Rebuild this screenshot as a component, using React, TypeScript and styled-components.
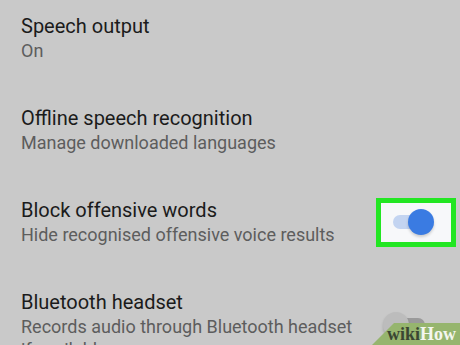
import React from "react";
import styled, { createGlobalStyle } from "styled-components";

const Global = createGlobalStyle`
  html, body {
    margin: 0;
    padding: 0;
    width: 460px;
    height: 345px;
    overflow: hidden;
    background: #c9c9c9;
  }
  * { box-sizing: border-box; }
`;

const Screen = styled.div`
  position: relative;
  width: 460px;
  height: 345px;
  overflow: hidden;
  background: #c9c9c9;
  padding-top: 1px;
  font-family: Roboto, "Noto Sans", sans-serif;
`;

const Row = styled.div`
  display: flex;
  height: 92px;
  padding: 12px 26px 0 21px;
`;

const RowInner = styled.div`
  display: flex;
  align-items: center;
  gap: 24px;
  align-self: flex-start;
  width: 100%;
`;

const TextCol = styled.div`
  flex: 1;
  min-width: 0;
  display: flex;
  flex-direction: column;
`;

const Title = styled.div`
  font-size: 20px;
  line-height: 26px;
  color: #1b1b1b;
`;

const Subtitle = styled.div`
  font-size: 18px;
  line-height: 23px;
  color: #5d5d5d;
`;

const SwitchWrap = styled.div`
  position: relative;
  width: 51px;
  height: 26px;
  flex: none;
`;

const Frame = styled.div`
  position: absolute;
  left: -7px;
  right: -22px;
  top: -11px;
  bottom: -12px;
  border: 5px solid #22e622;
  background: #f7f8fa;
  z-index: 0;
`;

const Track = styled.div<{ $on: boolean }>`
  position: absolute;
  left: 10px;
  top: 6px;
  width: 32px;
  height: 14px;
  border-radius: 7px;
  background: ${(p) => (p.$on ? "#c3d4f1" : "#9a9a9a")};
  z-index: 1;
`;

const Thumb = styled.div<{ $on: boolean }>`
  position: absolute;
  top: 0;
  left: ${(p) => (p.$on ? "25px" : "0")};
  width: 26px;
  height: 26px;
  border-radius: 50%;
  background: ${(p) => (p.$on ? "#3a7be2" : "#bcbcbc")};
  box-shadow: 0 2px 3px rgba(0, 0, 0, 0.18);
  z-index: 2;
`;

const Watermark = styled.div`
  position: absolute;
  right: 0;
  bottom: 0;
  width: 88px;
  height: 22px;
  background: #96b56e;
  clip-path: polygon(22px 0, 100% 0, 100% 100%, 0 100%);
  display: flex;
  align-items: center;
  justify-content: flex-end;
  padding-right: 4px;
  font-family: "Liberation Serif", "DejaVu Serif", serif;
  font-weight: bold;
  font-size: 18px;
  line-height: 22px;
  z-index: 5;
`;

const Wiki = styled.span`
  color: #3a4632;
`;

const How = styled.span`
  color: #f4f6ef;
`;

type Item = { title: string; sub: string; toggle?: "on" | "off"; framed?: boolean };

const items: Item[] = [
  { title: "Speech output", sub: "On" },
  { title: "Offline speech recognition", sub: "Manage downloaded languages" },
  {
    title: "Block offensive words",
    sub: "Hide recognised offensive voice results",
    toggle: "on",
    framed: true,
  },
  {
    title: "Bluetooth headset",
    sub: "Records audio through Bluetooth headset if available",
    toggle: "off",
  },
];

export default function App() {
  return (
    <>
      <Global />
      <Screen>
        {items.map((it) => (
          <Row key={it.title}>
            <RowInner>
              <TextCol>
                <Title>{it.title}</Title>
                <Subtitle>{it.sub}</Subtitle>
              </TextCol>
              {it.toggle && (
                <SwitchWrap>
                  {it.framed && <Frame />}
                  <Track $on={it.toggle === "on"} />
                  <Thumb $on={it.toggle === "on"} />
                </SwitchWrap>
              )}
            </RowInner>
          </Row>
        ))}
        <Watermark>
          <Wiki>wiki</Wiki>
          <How>How</How>
        </Watermark>
      </Screen>
    </>
  );
}
